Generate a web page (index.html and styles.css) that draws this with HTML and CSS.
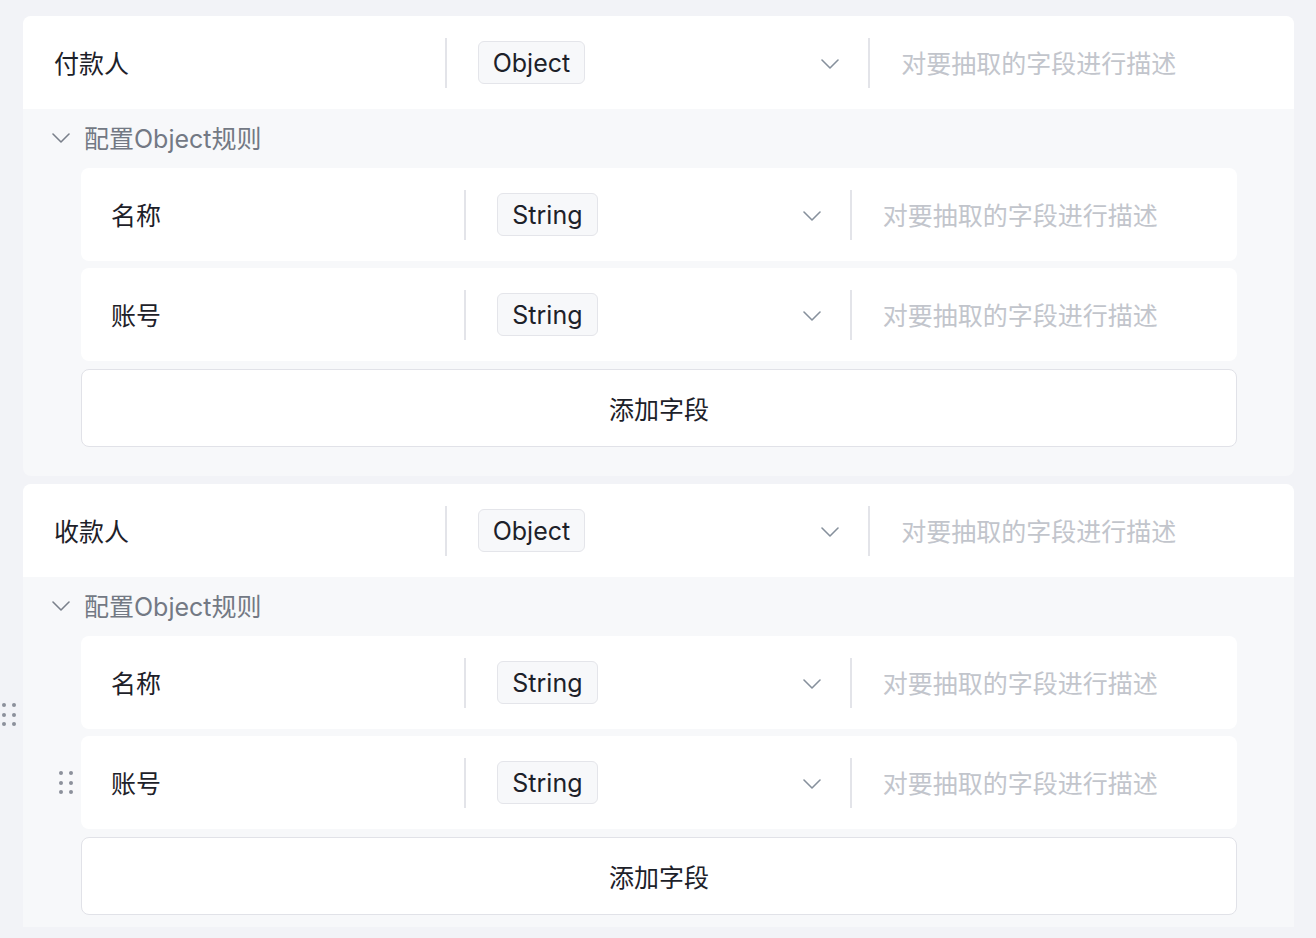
FILE: index.html
```html
<!DOCTYPE html>
<html lang="zh-CN">
<head>
<meta charset="utf-8">
<title>字段配置</title>
<link rel="stylesheet" href="styles.css">
</head>
<body>
<div class="viewport">
  <div class="list">
    <div class="card">
      <div class="row top-row">
        <div class="cell label">付款人</div>
        <div class="cell select">
          <span class="pill">Object</span>
          <svg class="chev" width="18" height="10" viewBox="0 0 18 10"><path d="M1 1 L9 9 L17 1" fill="none" stroke="#86909c" stroke-width="1.6" stroke-linecap="round" stroke-linejoin="round"/></svg>
        </div>
        <div class="cell desc">对要抽取的字段进行描述</div>
      </div>
      <div class="config">
        <div class="config-head">
          <svg class="chev-small" width="18" height="10" viewBox="0 0 18 10"><path d="M1 1 L9 9 L17 1" fill="none" stroke="#7a808b" stroke-width="1.6" stroke-linecap="round" stroke-linejoin="round"/></svg>
          <span>配置Object规则</span>
        </div>
        <div class="fields">
          <div class="row sub-row">
            <div class="cell label">名称</div>
            <div class="cell select">
              <span class="pill">String</span>
              <svg class="chev" width="18" height="10" viewBox="0 0 18 10"><path d="M1 1 L9 9 L17 1" fill="none" stroke="#86909c" stroke-width="1.6" stroke-linecap="round" stroke-linejoin="round"/></svg>
            </div>
            <div class="cell desc">对要抽取的字段进行描述</div>
          </div>
          <div class="row sub-row">
            <div class="cell label">账号</div>
            <div class="cell select">
              <span class="pill">String</span>
              <svg class="chev" width="18" height="10" viewBox="0 0 18 10"><path d="M1 1 L9 9 L17 1" fill="none" stroke="#86909c" stroke-width="1.6" stroke-linecap="round" stroke-linejoin="round"/></svg>
            </div>
            <div class="cell desc">对要抽取的字段进行描述</div>
          </div>
          <button class="add-btn">添加字段</button>
        </div>
      </div>
    </div>

    <div class="card card-hover">
      <div class="drag drag-card"><i></i><i></i><i></i><i></i><i></i><i></i></div>
      <div class="row top-row">
        <div class="cell label">收款人</div>
        <div class="cell select">
          <span class="pill">Object</span>
          <svg class="chev" width="18" height="10" viewBox="0 0 18 10"><path d="M1 1 L9 9 L17 1" fill="none" stroke="#86909c" stroke-width="1.6" stroke-linecap="round" stroke-linejoin="round"/></svg>
        </div>
        <div class="cell desc">对要抽取的字段进行描述</div>
      </div>
      <div class="config">
        <div class="config-head">
          <svg class="chev-small" width="18" height="10" viewBox="0 0 18 10"><path d="M1 1 L9 9 L17 1" fill="none" stroke="#7a808b" stroke-width="1.6" stroke-linecap="round" stroke-linejoin="round"/></svg>
          <span>配置Object规则</span>
        </div>
        <div class="fields">
          <div class="row sub-row">
            <div class="cell label">名称</div>
            <div class="cell select">
              <span class="pill">String</span>
              <svg class="chev" width="18" height="10" viewBox="0 0 18 10"><path d="M1 1 L9 9 L17 1" fill="none" stroke="#86909c" stroke-width="1.6" stroke-linecap="round" stroke-linejoin="round"/></svg>
            </div>
            <div class="cell desc">对要抽取的字段进行描述</div>
          </div>
          <div class="row sub-row sub-hover">
            <div class="drag drag-row"><i></i><i></i><i></i><i></i><i></i><i></i></div>
            <div class="cell label">账号</div>
            <div class="cell select">
              <span class="pill">String</span>
              <svg class="chev" width="18" height="10" viewBox="0 0 18 10"><path d="M1 1 L9 9 L17 1" fill="none" stroke="#86909c" stroke-width="1.6" stroke-linecap="round" stroke-linejoin="round"/></svg>
            </div>
            <div class="cell desc">对要抽取的字段进行描述</div>
          </div>
          <button class="add-btn">添加字段</button>
        </div>
      </div>
    </div>
  </div>
</div>
</body>
</html>
```

FILE: styles.css
```css
* { box-sizing: border-box; }

html, body {
  margin: 0;
  padding: 0;
  background: #f2f3f7;
  font-family: Inter, "Noto Sans CJK SC", sans-serif;
  font-size: 25px;
  color: #1d2129;
}

.viewport {
  height: 927px;
  overflow: hidden;
  padding: 16px 22px 0 23px;
}

.list {
  display: flex;
  flex-direction: column;
  gap: 8px;
}

.card {
  position: relative;
  background: #f7f8fa;
  border-radius: 8px;
}

.row {
  display: grid;
  grid-template-columns: 1fr 1fr 1fr;
  align-items: center;
  height: 93px;
  background: #ffffff;
}

.top-row {
  border-radius: 8px 8px 0 0;
}

.sub-row {
  border-radius: 8px;
  position: relative;
}

.cell {
  height: 50px;
  display: flex;
  align-items: center;
  padding-bottom: 2px;
}

.label {
  padding-left: 31px;
  color: #1d2129;
  border-right: 2px solid #e3e4e9;
}

.sub-row .label {
  padding-left: 30px;
}

.select {
  padding: 0 29px 0 31px;
  justify-content: space-between;
  border-right: 2px solid #e3e4e9;
}

.pill {
  display: inline-flex;
  align-items: center;
  height: 43px;
  padding: 2px 14px 0 14px;
  background: #f7f8fa;
  border: 1px solid #e4e5ea;
  border-radius: 6px;
  color: #1d2129;
  line-height: 1;
}

.chev {
  display: block;
  margin-top: 2px;
}

.desc {
  padding-left: 31px;
  color: #c2c5cc;
}

.config {
  padding: 0 57px 29px 58px;
}

.config-head {
  height: 59px;
  display: flex;
  align-items: center;
  margin-left: -28px;
  padding-bottom: 4px;
  color: #737984;
}

.chev-small {
  display: block;
  margin-right: 14px;
  margin-top: 2px;
  margin-left: -1px;
}

.fields {
  display: flex;
  flex-direction: column;
  gap: 7px;
}

.add-btn {
  margin-top: 1px;
  height: 78px;
  padding-bottom: 2px;
  background: #ffffff;
  border: 1px solid #e1e2e8;
  border-radius: 8px;
  font-family: Inter, "Noto Sans CJK SC", sans-serif;
  font-size: 25px;
  color: #1d2129;
  cursor: pointer;
}

.drag {
  position: absolute;
  display: grid;
  grid-template-columns: 4px 4px;
  grid-auto-rows: 4px;
  column-gap: 6px;
  row-gap: 5.5px;
}

.drag i {
  display: block;
  width: 4px;
  height: 4px;
  border-radius: 50%;
  background: #8c919b;
}

.drag-card {
  left: -21px;
  top: 219px;
}

.drag-row {
  left: -22px;
  top: 35px;
}
```
